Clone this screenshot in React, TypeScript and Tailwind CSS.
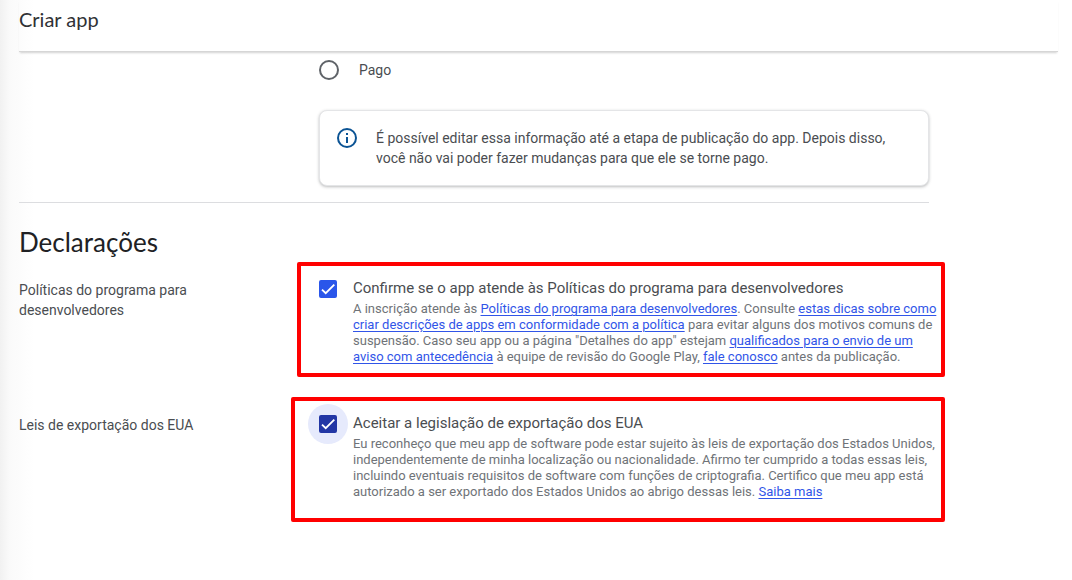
import { useState, type ReactNode } from "react";

type DeclarationProps = {
  id: string;
  label: ReactNode;
  title: string;
  children: ReactNode;
  highlight: string;
  focused?: boolean;
};

function InfoIcon() {
  return (
    <svg viewBox="0 0 20 20" className="size-5 shrink-0 text-[#0b5394]" fill="none" aria-hidden="true">
      <circle cx="10" cy="10" r="9" stroke="currentColor" strokeWidth="2" />
      <path d="M9 9h2v6H9zM9 5h2v2H9z" fill="currentColor" />
    </svg>
  );
}

function Link({ children }: { children: ReactNode }) {
  return (
    <a href="#" className="text-[#3155e8] underline decoration-1 underline-offset-2">
      {children}
    </a>
  );
}

function Declaration({ id, label, title, children, highlight, focused }: DeclarationProps) {
  const [checked, setChecked] = useState(true);

  return (
    <div className="flex items-start">
      <div className="w-[300px] shrink-0 pt-0.5 text-sm leading-5">{label}</div>
      <div className="relative flex min-w-0 flex-1 items-start gap-4">
        <span
          className={`-mx-[11px] -my-[9px] grid size-10 shrink-0 place-items-center rounded-full ${
            focused ? "bg-[#e6eafc]" : ""
          }`}
        >
          <input
            id={id}
            type="checkbox"
            checked={checked}
            onChange={(e) => setChecked(e.target.checked)}
            className={`col-start-1 row-start-1 size-[18px] appearance-none rounded-xs border-2 border-[#5f6368] outline-none ${
              focused ? "checked:border-[#2236a5] checked:bg-[#2236a5]" : "checked:border-[#2a56ea] checked:bg-[#2a56ea]"
            }`}
          />
          {checked && (
            <svg
              viewBox="0 0 24 24"
              className="pointer-events-none col-start-1 row-start-1 size-[14px] text-white"
              fill="none"
              aria-hidden="true"
            >
              <path d="M1.73 12.91 8.1 19.28 22.79 4.59" stroke="currentColor" strokeWidth="3.12" />
            </svg>
          )}
        </span>
        <div className="-mr-3 min-w-0">
          <label htmlFor={id} className="block text-[15px] leading-5">
            {title}
          </label>
          <p className="mt-[3px] text-[13px] leading-4 text-[#6f7378]">{children}</p>
        </div>
        <div className={`pointer-events-none absolute rounded-xs border-4 border-[#ff0000] ${highlight}`} />
      </div>
    </div>
  );
}

export default function App() {
  return (
    <div className="min-h-screen bg-[linear-gradient(to_right,#f1f1f1,#fafafa_10px,#ffffff_34px)] pl-[19px] font-[Roboto,sans-serif] text-[#4a4d51]">
      <header className="mr-[14px] h-[52px] border-b border-[#d6d6d6] pt-[7px] shadow-[0_2px_2px_-1px_rgba(0,0,0,0.18)]">
        <h1 className="font-[Lato,sans-serif] text-xl leading-6 text-[#303134]">Criar app</h1>
      </header>

      <main className="max-w-[910px]">
        <div className="pt-2 pl-[300px]">
          <label className="flex items-center gap-5 text-sm leading-5">
            <input
              type="radio"
              name="price"
              className="size-5 appearance-none rounded-full border-2 border-[#5f6368]"
            />
            Pago
          </label>
        </div>

        <div className="mt-[30px] ml-[300px] flex items-start gap-[19px] rounded-lg border border-[#e4e5e7] bg-white px-[17px] py-[17px] shadow-[0_1px_3px_rgba(60,64,67,0.35)]">
          <InfoIcon />
          <p className="text-sm leading-5">
            É possível editar essa informação até a etapa de publicação do app. Depois disso,
            <br />
            você não vai poder fazer mudanças para que ele se torne pago.
          </p>
        </div>

        <hr className="mt-4 border-[#dcdde0]" />

        <section>
          <h2 className="mt-[23px] font-[Lato,sans-serif] text-[26px] leading-8 text-[#202124]">Declarações</h2>

          <div className="mt-5 flex flex-col gap-12">
            <Declaration
              id="policies"
              label={
                <>
                  Políticas do programa para
                  <br />
                  desenvolvedores
                </>
              }
              title="Confirme se o app atende às Políticas do programa para desenvolvedores"
              highlight="-top-4 -bottom-3 -left-[22px] -right-4"
            >
              A inscrição atende às <Link>Políticas do programa para desenvolvedores</Link>. Consulte{" "}
              <Link>
                estas dicas sobre como
                <br />
                criar descrições de apps em conformidade com a política
              </Link>{" "}
              para evitar alguns dos motivos comuns de
              <br />
              suspensão. Caso seu app ou a página "Detalhes do app" estejam{" "}
              <Link>
                qualificados para o envio de um
                <br />
                aviso com antecedência
              </Link>{" "}
              à equipe de revisão do Google Play, <Link>fale conosco</Link> antes da publicação.
            </Declaration>

            <Declaration
              id="export-laws"
              label="Leis de exportação dos EUA"
              title="Aceitar a legislação de exportação dos EUA"
              highlight="-top-4 -bottom-[22px] -left-7 -right-4"
              focused
            >
              Eu reconheço que meu app de software pode estar sujeito às leis de exportação dos Estados Unidos,
              <br />
              independentemente de minha localização ou nacionalidade. Afirmo ter cumprido a todas essas leis,
              <br />
              incluindo eventuais requisitos de software com funções de criptografia. Certifico que meu app está
              <br />
              autorizado a ser exportado dos Estados Unidos ao abrigo dessas leis. <Link>Saiba mais</Link>
            </Declaration>
          </div>
        </section>
      </main>
    </div>
  );
}
